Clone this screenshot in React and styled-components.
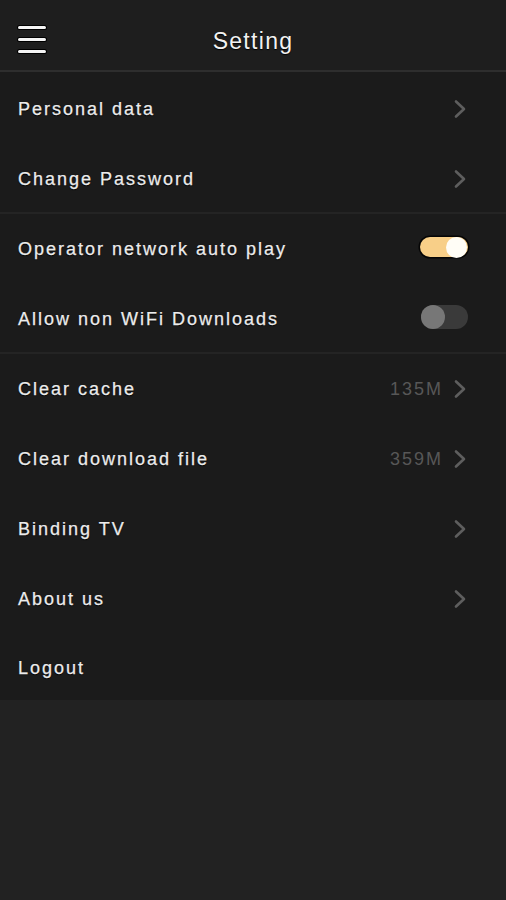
import React from 'react'
import styled, { createGlobalStyle } from 'styled-components'

const GlobalStyle = createGlobalStyle`
  html, body {
    margin: 0;
    padding: 0;
    background: #222222;
  }
  body {
    font-family: 'Liberation Sans', Arial, sans-serif;
    -webkit-font-smoothing: antialiased;
  }
`

const Screen = styled.div`
  width: 506px;
  min-height: 900px;
  background: #222222;
`

const Header = styled.header`
  height: 72px;
  box-sizing: border-box;
  padding-top: 12px;
  display: flex;
  align-items: center;
  justify-content: center;
  position: relative;
  background: #1e1e1e;
  border-bottom: 2px solid #2e2e2e;
`

const MenuButton = styled.button`
  position: absolute;
  left: 18px;
  top: 26px;
  width: 28px;
  height: 27px;
  padding: 0;
  border: none;
  background: none;
  display: flex;
  flex-direction: column;
  justify-content: space-between;
`

const Bar = styled.span`
  display: block;
  height: 3px;
  border-radius: 2px;
  background: #f4f4f4;
  box-shadow: 0 0 0 1px #000;
`

const Title = styled.h1`
  margin: 0;
  font-size: 23px;
  font-weight: 400;
  letter-spacing: 1.3px;
  color: #f2f2f2;
  text-shadow: 0 1px 1px #000;
`

const List = styled.div`
  background: #1b1b1b;
`

const Group = styled.section`
  & + & {
    box-shadow: inset 0 2px 0 #242424;
  }
`

const Row = styled.div`
  height: ${p => p.$h || 70}px;
  display: flex;
  align-items: center;
  padding: 0 41px 0 18px;
`

const Label = styled.span`
  flex: 1;
  padding-top: 4px;
  font-size: 18px;
  letter-spacing: 2px;
  color: #ececec;
  -webkit-text-stroke: 0.25px #ececec;
  text-shadow: 0 1px 1px #000;
`

const Value = styled.span`
  padding-top: 4px;
  font-size: 18px;
  letter-spacing: 2px;
  color: #575757;
  margin-right: 10px;
`

const Track = styled.div`
  width: ${p => (p.$on ? 48 : 47)}px;
  height: ${p => (p.$on ? 20 : 24)}px;
  border-radius: 12px;
  margin-right: -3px;
  display: flex;
  align-items: center;
  justify-content: ${p => (p.$on ? 'flex-end' : 'flex-start')};
  background: ${p => (p.$on ? '#f8cf88' : '#3a3a3a')};
  box-shadow: ${p => (p.$on ? '0 0 0 1.5px #050505' : 'none')};
`

const Knob = styled.div`
  width: ${p => (p.$on ? 21 : 24)}px;
  height: ${p => (p.$on ? 21 : 24)}px;
  border-radius: 50%;
  margin: ${p => (p.$on ? '0 1px 0 0' : '0')};
  background: ${p => (p.$on ? '#fffdf6' : '#777777')};
`

const Chevron = () => (
  <svg width="14" height="20" viewBox="0 0 14 20" style={{ marginRight: -2, marginTop: 3 }}>
    <path d="M3 2.5 L11 10 L3 17.5" fill="none" stroke="#5e5e5e" strokeWidth="2.6" strokeLinecap="round" strokeLinejoin="round" />
  </svg>
)

const Toggle = ({ on }) => (
  <Track $on={on}>
    <Knob $on={on} />
  </Track>
)

const Item = ({ label, value, arrow, toggle, h }) => (
  <Row $h={h}>
    <Label>{label}</Label>
    {value && <Value>{value}</Value>}
    {toggle !== undefined && <Toggle on={toggle} />}
    {arrow && <Chevron />}
  </Row>
)

export default function App() {
  return (
    <Screen>
      <GlobalStyle />
      <Header>
        <MenuButton aria-label="menu">
          <Bar />
          <Bar />
          <Bar />
        </MenuButton>
        <Title>Setting</Title>
      </Header>
      <List>
        <Group>
          <Item label="Personal data" arrow />
          <Item label="Change Password" arrow />
        </Group>
        <Group>
          <Item label="Operator network auto play" toggle={true} />
          <Item label="Allow non WiFi Downloads" toggle={false} />
        </Group>
        <Group>
          <Item label="Clear cache" value="135M" arrow />
          <Item label="Clear download file" value="359M" arrow />
          <Item label="Binding TV" arrow />
          <Item label="About us" arrow />
          <Item label="Logout" h={68} />
        </Group>
      </List>
    </Screen>
  )
}
